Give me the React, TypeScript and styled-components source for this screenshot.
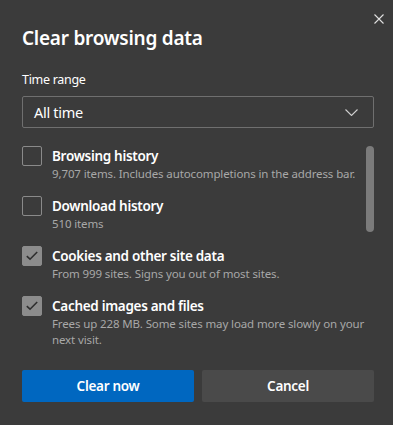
import styled, { createGlobalStyle } from "styled-components";

const GlobalStyle = createGlobalStyle`
  html, body {
    margin: 0;
    padding: 0;
    background: #3b3b3b;
  }
  body {
    font-family: "Noto Sans", "Open Sans", sans-serif;
    color: #ffffff;
  }
`;

const items = [
  {
    title: "Browsing history",
    sub: "9,707 items. Includes autocompletions in the address bar.",
    checked: false,
  },
  { title: "Download history", sub: "510 items", checked: false },
  {
    title: "Cookies and other site data",
    sub: "From 999 sites. Signs you out of most sites.",
    checked: true,
  },
  {
    title: "Cached images and files",
    sub: "Frees up 228 MB. Some sites may load more slowly on your next visit.",
    checked: true,
  },
];

const App = () => {
  return (
    <>
      <GlobalStyle />
      <Dialog>
        <Header>
          <Title>Clear browsing data</Title>
          <CloseButton aria-label="Close">
            <svg width="10" height="10" viewBox="0 0 10 10">
              <path d="M0.5 0.5 L9.5 9.5 M9.5 0.5 L0.5 9.5" stroke="#e0e0e0" strokeWidth="1.1" />
            </svg>
          </CloseButton>
        </Header>
        <Label>Time range</Label>
        <Select>
          <span>All time</span>
          <svg width="13" height="7" viewBox="0 0 13 7">
            <path d="M0.5 0.5 L6.5 6.5 L12.5 0.5" stroke="#d0d0d0" strokeWidth="1.1" fill="none" />
          </svg>
        </Select>
        <ListArea>
          <List>
            {items.map((it) => (
              <Item key={it.title}>
                <Box $checked={it.checked}>
                  {it.checked && (
                    <svg width="20" height="20" viewBox="0 0 20 20">
                      <path d="M4.8 10.2 L8 13.2 L15.2 6" stroke="#2e2e2e" strokeWidth="1.6" fill="none" />
                    </svg>
                  )}
                </Box>
                <ItemText>
                  <ItemTitle>{it.title}</ItemTitle>
                  <ItemSub>{it.sub}</ItemSub>
                </ItemText>
              </Item>
            ))}
          </List>
          <Track>
            <Thumb />
          </Track>
        </ListArea>
        <Buttons>
          <Button $primary>Clear now</Button>
          <Button>Cancel</Button>
        </Buttons>
      </Dialog>
    </>
  );
};

const Dialog = styled.div`
  width: 393px;
  height: 425px;
  box-sizing: border-box;
  padding: 0 19px 0 22px;
  display: flex;
  flex-direction: column;
  background: #3b3b3b;
`;

const Header = styled.div`
  display: flex;
  justify-content: space-between;
  align-items: flex-start;
`;

const Title = styled.h1`
  margin: 25px 0 0;
  font-size: 19px;
  line-height: 26px;
  font-weight: 600;
  letter-spacing: -0.25px;
  color: #ffffff;
`;

const CloseButton = styled.button`
  margin: 14px -10px 0 0;
  padding: 0;
  width: 10px;
  height: 10px;
  border: none;
  background: none;
  display: flex;
`;

const Label = styled.div`
  margin-top: 20px;
  font-size: 12.5px;
  line-height: 18px;
  letter-spacing: -0.3px;
  color: #ffffff;
`;

const Select = styled.div`
  margin-top: 7px;
  height: 32px;
  width: 352px;
  box-sizing: border-box;
  border: 1px solid #6f6f6f;
  border-radius: 2px;
  display: flex;
  align-items: center;
  justify-content: space-between;
  padding: 0 15px 0 11px;
  font-size: 14.5px;
  letter-spacing: -0.3px;
  color: #ffffff;
`;

const ListArea = styled.div`
  margin-top: 18px;
  height: 210px;
  display: flex;
  overflow: hidden;
`;

const List = styled.div`
  flex: 1;
  display: flex;
  flex-direction: column;
  gap: 14px;
`;

const Item = styled.div`
  display: flex;
  gap: 10px;
  align-items: flex-start;
`;

const Box = styled.div<{ $checked?: boolean }>`
  flex: none;
  width: 20px;
  height: 20px;
  box-sizing: border-box;
  border-radius: 2px;
  border: 1px solid ${(p) => (p.$checked ? "#8c8c8c" : "#8a8a8a")};
  background: ${(p) => (p.$checked ? "#8c8c8c" : "transparent")};
  display: flex;
  align-items: center;
  justify-content: center;
  svg {
    margin: -1px;
  }
`;

const ItemText = styled.div`
  display: flex;
  flex-direction: column;
  max-width: 320px;
`;

const ItemTitle = styled.div`
  font-size: 13.5px;
  line-height: 20px;
  font-weight: 600;
  letter-spacing: -0.3px;
  color: #ffffff;
`;

const ItemSub = styled.div`
  font-size: 11.5px;
  line-height: 16px;
  letter-spacing: -0.12px;
  color: #a8a8a8;
`;

const Track = styled.div`
  flex: none;
  width: 8px;
  margin-left: -8px;
`;

const Thumb = styled.div`
  width: 8px;
  height: 86px;
  border-radius: 4px;
  background: #7b7b7b;
`;

const Buttons = styled.div`
  margin-top: 14px;
  display: flex;
  gap: 8px;
  width: 352px;
`;

const Button = styled.button<{ $primary?: boolean }>`
  flex: 1;
  height: 32px;
  border: none;
  border-radius: 2px;
  font-family: inherit;
  font-size: 13.5px;
  font-weight: 600;
  letter-spacing: -0.3px;
  color: #ffffff;
  background: ${(p) => (p.$primary ? "#0067c0" : "#4a4a4a")};
`;

export default App;
